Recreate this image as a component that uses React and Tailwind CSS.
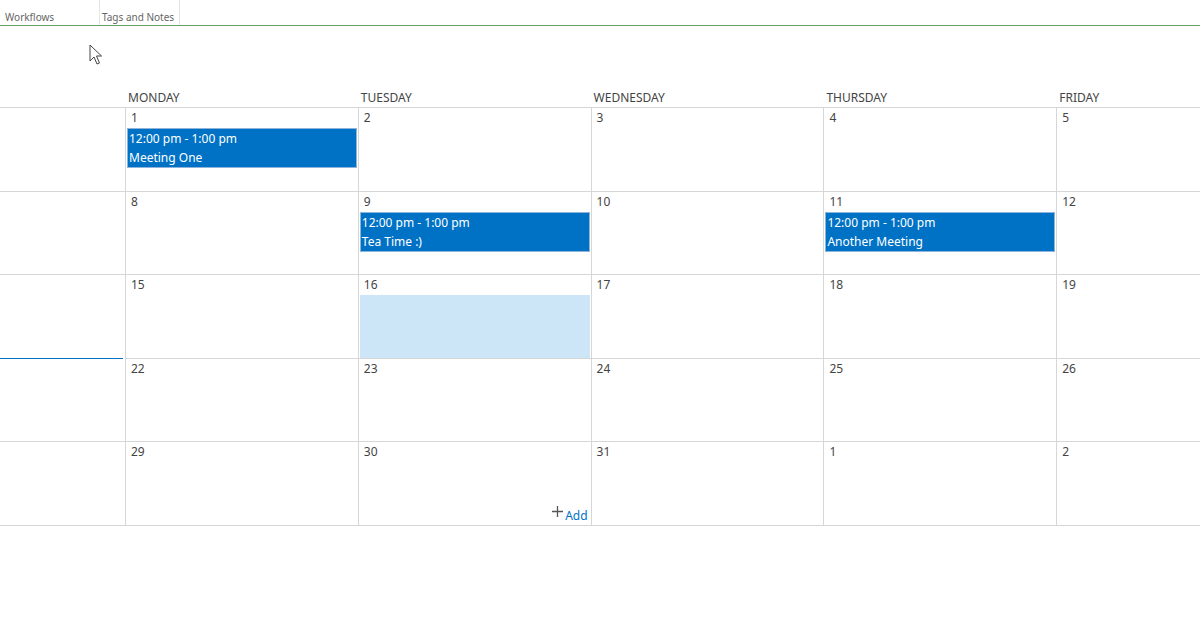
const days = ["MONDAY", "TUESDAY", "WEDNESDAY", "THURSDAY", "FRIDAY"];

const weeks = [
  [1, 2, 3, 4, 5],
  [8, 9, 10, 11, 12],
  [15, 16, 17, 18, 19],
  [22, 23, 24, 25, 26],
  [29, 30, 31, 1, 2],
];

const events = {
  1: "Meeting One",
  9: "Tea Time :)",
  11: "Another Meeting",
};

function Cursor() {
  return (
    <svg className="absolute left-[89px] top-[44px]" width="14" height="22" viewBox="0 0 14 22">
      <path
        d="M1 1 L1 17 L5 13 L8 20 L10.5 19 L7.5 12 L12.5 12 Z"
        fill="white"
        stroke="#444"
        strokeWidth="1"
        strokeLinejoin="round"
      />
    </svg>
  );
}

function Cell({ day, wi, di }) {
  const ev = wi < 2 ? events[day] : null;
  const selected = wi === 2 && di === 1;
  const showAdd = wi === 4 && di === 1;

  return (
    <div className="flex flex-col border-l border-[#d6d6d6] h-full">
      <div className="h-[20px] leading-[20px] pl-[5px] text-[12px] text-[#444]">{day}</div>
      {ev && (
        <div className="mx-[1px] h-[40px] bg-[#0072c6] border border-[#8fb4dc] text-white text-[12px] leading-[19px] pl-[1px]">
          <div>12:00 pm - 1:00 pm</div>
          <div className="leading-[20px]">{ev}</div>
        </div>
      )}
      {selected && <div className="mx-[1px] flex-1 bg-[#cde6f7]" />}
      {showAdd && (
        <div className="flex-1 flex items-end justify-end pr-[3px] pb-[1px]">
          <svg className="mb-[7px] mr-[2px]" width="11" height="11" viewBox="0 0 11 11">
            <path d="M5.5 0 V11 M0 5.5 H11" stroke="#555" strokeWidth="1.3" />
          </svg>
          <span className="text-[12px] leading-[16px] text-[#0072c6]">Add</span>
        </div>
      )}
    </div>
  );
}

export default function App() {
  return (
    <div
      className="relative w-[1200px] h-[630px] overflow-hidden bg-white"
      style={{ fontFamily: '"Noto Sans", "Open Sans", sans-serif' }}
    >
      <div className="flex h-[26px] border-b border-[#62a064] text-[10px] text-[#666]">
        <div className="w-[100px] pl-[5px] pt-[10px] border-r border-[#e4e4e4]">Workflows</div>
        <div className="w-[80px] pl-[2px] pt-[10px] border-r border-[#e4e4e4]">Tags and Notes</div>
      </div>

      <Cursor />

      <div className="grid grid-cols-[125px_repeat(5,232.8px)] h-[81px] items-end pb-[1px]">
        <div />
        {days.map((d) => (
          <div key={d} className="pl-[3px] text-[12px] leading-[16px] text-[#444]">
            {d}
          </div>
        ))}
      </div>

      <div className="border-b border-[#d6d6d6]">
        {weeks.map((w, wi) => (
          <div key={wi} className="grid grid-cols-[125px_repeat(5,232.8px)] h-[83.6px]">
            <div className={wi === 3 ? "border-t border-[#0072c6] mr-[2px]" : "border-t border-[#d6d6d6]"} />
            {w.map((day, di) => (
              <div key={di} className="border-t border-[#d6d6d6]">
                <Cell day={day} wi={wi} di={di} />
              </div>
            ))}
          </div>
        ))}
      </div>
    </div>
  );
}
